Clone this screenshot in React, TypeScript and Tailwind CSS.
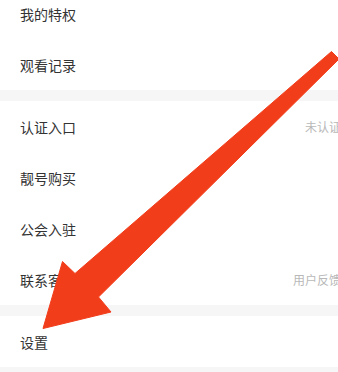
import React from 'react';

type Row = { label: string; extra?: string };

const groups: Row[][] = [
  [{ label: '我的特权' }, { label: '观看记录' }],
  [
    { label: '认证入口', extra: '未认证' },
    { label: '靓号购买' },
    { label: '公会入驻' },
    { label: '联系客服', extra: '用户反馈' },
  ],
  [{ label: '设置' }],
];

const MenuRow = ({ row }: { row: Row }) => (
  <div className="h-[51px] flex items-center justify-between pl-[20px] bg-white">
    <span className="text-[14px] text-[#333333] leading-none">{row.label}</span>
    {row.extra && (
      <span className="text-[12px] text-[#b8b8b8] leading-none whitespace-nowrap">{row.extra}</span>
    )}
  </div>
);

// the annotation arrow drawn over the menu
const Arrow = () => (
  <svg className="absolute left-0 top-0 pointer-events-none" width="338" height="372" viewBox="0 0 338 372">
    <polygon
      points="331.5,51.5 339,59 98.5,297 111,312 43,328.5 62.5,261.5 75,273.5"
      fill="#f23d1b"
      stroke="#f23d1b"
      strokeWidth="1"
      strokeLinejoin="round"
    />
  </svg>
);

const App = () => {
  return (
    <div className="relative w-[338px] h-[372px] overflow-hidden bg-[#f6f6f6]" style={{ fontFamily: '"Noto Sans CJK SC", "Noto Sans", sans-serif' }}>
      <div className="-mt-[12px] w-[341px] flex flex-col gap-[11px]">
        {groups.map((g, i) => (
          <div key={i} className="bg-white">
            {g.map((row) => (
              <MenuRow key={row.label} row={row} />
            ))}
          </div>
        ))}
      </div>
      <Arrow />
    </div>
  );
};

export default App;
